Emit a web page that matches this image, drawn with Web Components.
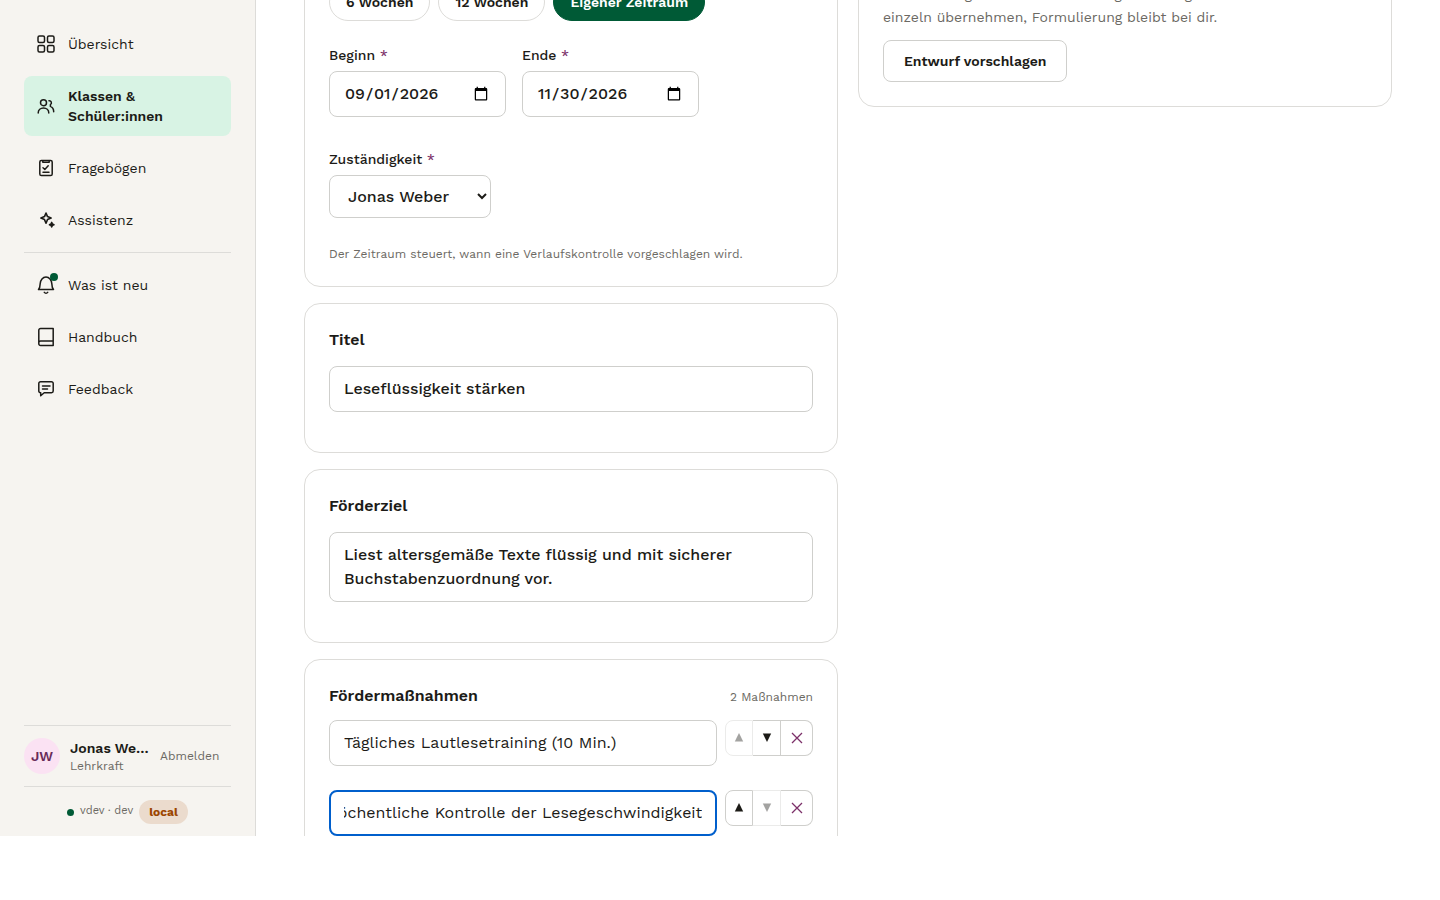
<!DOCTYPE html>
<html lang="de">
<head>
<meta charset="utf-8">
<title>Förderplan bearbeiten</title>
<style>
html, body { margin: 0; height: 100%; }
body {
  --ink: #1c1b17; --muted: #6b6963; --line: #dddcd9; --field: #cfcfcc; --brand: #005a36; --plum: #7c3069;
  background: #fff; color: var(--ink);
  font: 400 14px/20px "Work Sans", Inter, "Liberation Sans", sans-serif;
}
</style>
</head>
<body>
<app-shell>
  <side-bar slot="side">
    <nav-item icon="grid">Übersicht</nav-item>
    <nav-item icon="people" current>Klassen &amp; Schüler:innen</nav-item>
    <nav-item icon="clipboard">Fragebögen</nav-item>
    <nav-item icon="sparkle">Assistenz</nav-item>
    <nav-item icon="bell" unread class="section">Was ist neu</nav-item>
    <nav-item icon="book">Handbuch</nav-item>
    <nav-item icon="chat">Feedback</nav-item>
    <user-panel slot="foot"></user-panel>
  </side-bar>
  <plan-column>
    <period-card></period-card>
    <text-card heading="Titel" value="Leseflüssigkeit stärken"></text-card>
    <text-card heading="Förderziel" multiline value="Liest altersgemäße Texte flüssig und mit sicherer Buchstabenzuordnung vor."></text-card>
    <measures-card></measures-card>
  </plan-column>
  <plan-column><draft-card></draft-card></plan-column>
</app-shell>

<script>
const base = `
  *, *::before, *::after { box-sizing: border-box; }
  button, input, textarea, select { font: inherit; color: inherit; margin: 0; }
  h2 { margin: 0; font-size: 16px; line-height: 24px; font-weight: 600; }
  .field { display: block; width: 100%; border: 1px solid var(--field); border-radius: 8px; background: #fff;
    font-size: 16px; line-height: 24px; padding: 10px 14px; outline: none; }
`;
const card = `
  :host { display: block; border: 1px solid var(--line); border-radius: 16px; padding: 24px; background: #fff; box-sizing: border-box; }
`;
function define(name, css, html, ready) {
  customElements.define(name, class extends HTMLElement {
    constructor() {
      super();
      this.attachShadow({ mode: 'open' });
    }
    connectedCallback() {
      const body = typeof html === 'function' ? html(this) : html;
      this.shadowRoot.innerHTML = `<style>${base}${css}</style>${body}`;
      if (ready) ready(this.shadowRoot);
    }
  });
}

define('app-shell', `
  :host { display: grid; grid-template-columns: 256px minmax(0, 1fr); height: calc(100vh - 64px); overflow: hidden; }
  main { display: grid; grid-template-columns: repeat(2, minmax(0, 1fr)); gap: 20px; padding: 0 48px; align-items: start; min-height: 0; overflow: hidden; }
`, `<slot name="side"></slot><main><slot></slot></main>`);

define('side-bar', `
  :host { display: flex; flex-direction: column; background: #f6f4f0; border-right: 1px solid var(--line); padding: 24px 24px 0; min-height: 0; box-sizing: border-box; }
  nav { display: flex; flex-direction: column; gap: 12px; flex: 1; min-height: 0; }
  ::slotted(.section) { border-top: 1px solid var(--line); padding-top: 12px; }
`, `<nav aria-label="Hauptmenü"><slot></slot></nav><slot name="foot"></slot>`);

const icons = {
  grid: '<rect x="2" y="2" width="6.500" height="6.500" rx="1.500"/><rect x="11.500" y="2" width="6.500" height="6.500" rx="1.500"/><rect x="2" y="11.500" width="6.500" height="6.500" rx="1.500"/><rect x="11.500" y="11.500" width="6.500" height="6.500" rx="1.500"/>',
  people: '<circle cx="7.500" cy="6.700" r="3"/><path d="M2.200 17c0-3 2.400-5 5.300-5s5.300 2 5.300 5M13 4.700c2.200-.3 3.400 2.700 1.400 3.900v1.800c2 .9 3.300 3 3.300 5.400"/>',
  clipboard: '<rect x="3.800" y="2.400" width="12.400" height="15.200" rx="1.600"/><path d="M6.800 2.800v1.500h6.400V2.800M7 9.800l1.800 1.600 3.400-3.600M7 14.200h6"/>',
  sparkle: '<path d="M10 3l1.500 3.600 3.600 1.500-3.600 1.500L10 13.200 8.500 9.600 4.900 8.100l3.600-1.500z" stroke-width="1.600"/><path d="M15.700 12.400l.7 1.600 1.600.7-1.600.7-.7 1.600-.7-1.600-1.600-.7 1.600-.7z" fill="currentColor"/>',
  bell: '<path d="M2.500 14.600h15c-1.300-1.500-1.600-3.300-1.700-6C15.600 5 13.200 2 10 2S4.400 5 4.200 8.600c-.1 2.700-.4 4.500-1.700 6zM8.300 17.400c.8 1.100 2.600 1.100 3.400 0"/>',
  book: '<path d="M17.200 1.500v17H4.600A1.800 1.800 0 0 1 2.800 16.700V3.300A1.800 1.800 0 0 1 4.600 1.500zM2.800 16.700v-1a1.800 1.800 0 0 1 1.800-1.800H17.200"/>',
  chat: '<path d="M4.500 2.700h11A1.700 1.700 0 0 1 17.200 4.400v7.700a1.700 1.700 0 0 1-1.700 1.700H8.200L4.700 16.800v-3H4.500a1.700 1.700 0 0 1-1.700-1.700V4.400a1.700 1.700 0 0 1 1.700-1.700zM6.500 7h7.500M6.500 10h5"/>'
};
define('nav-item', `
  :host { display: block; }
  a { display: flex; align-items: center; gap: 12px; padding: 10px 12px; border-radius: 8px; color: inherit; text-decoration: none; }
  .icon { position: relative; flex: none; width: 20px; height: 20px; }
  svg { display: block; width: 20px; height: 20px; fill: none; stroke: currentColor; stroke-width: 1.5; stroke-linecap: round; stroke-linejoin: round; }
  .dot { position: absolute; top: -2px; right: -2px; width: 8px; height: 8px; border-radius: 50%; background: var(--brand); }
  :host([current]) a { background: #d8f3e4; font-weight: 600; }
`, el => `<a href="#" ${el.hasAttribute('current') ? 'aria-current="page"' : ''}>
  <span class="icon"><svg viewBox="0 0 20 20" aria-hidden="true">${icons[el.getAttribute('icon')]}</svg>${el.hasAttribute('unread') ? '<span class="dot"></span>' : ''}</span>
  <span><slot></slot></span></a>`);

define('user-panel', `
  :host { display: block; font-size: 12px; line-height: 16px; color: var(--muted); }
  .user { display: flex; align-items: center; gap: 10px; border: solid var(--line); border-width: 1px 0; padding: 12px 0; }
  .avatar { display: grid; place-items: center; flex: none; width: 36px; height: 36px; border-radius: 50%; background: #fbe2f3; color: #692b58; font-size: 14px; font-weight: 600; }
  .who { width: 80px; }
  .name { display: block; color: var(--ink); font-size: 14px; line-height: 20px; font-weight: 600; overflow: hidden; white-space: nowrap; text-overflow: ellipsis; }
  button { border: 0; background: none; padding: 0; }
  .env { display: flex; align-items: center; justify-content: center; gap: 6px; padding: 13px 0 12px; }
  .version { font-size: 11px; padding-bottom: 2px; }
  .dot { width: 7px; height: 7px; border-radius: 50%; background: var(--brand); }
  .badge { background: #ebdbcd; color: #9c4600; font-weight: 700; border-radius: 12px; padding: 4px 10px; }
`, `<div class="user"><span class="avatar">JW</span><span class="who"><span class="name">Jonas Weber</span>Lehrkraft</span><button type="button">Abmelden</button></div>
  <div class="env"><span class="dot"></span><span class="version">vdev · dev</span><span class="badge">local</span></div>`);

define('plan-column', `
  :host { display: flex; flex-direction: column; gap: 16px; min-width: 0; }
`, `<slot></slot>`);

define('period-card', card + `
  :host { margin-top: -42px; }
  .chips { display: flex; gap: 8px; margin-bottom: 24px; }
  .chips button { border: 1px solid var(--line); border-radius: 20px; background: #fff; padding: 8px 16px; line-height: 20px; font-weight: 600; white-space: nowrap; }
  .chips button[aria-pressed=true] { background: var(--brand); border-color: var(--brand); color: #fff; }
  .row { display: flex; flex-wrap: wrap; gap: 16px; }
  .item { padding-bottom: 16px; }
  label { display: block; font-weight: 500; margin-bottom: 6px; }
  label span { color: var(--plum); }
  .field { font-weight: 500; }
  input.field { width: 177px; height: 46px; }
  .owner { flex-basis: 100%; }
  select.field { width: 162px; height: 43px; padding: 8px 0 8px 14px; }
  p { margin: 12px 0 0; font-size: 12px; line-height: 16px; color: var(--muted); }
`, `<div class="chips"><button type="button">6 Wochen</button><button type="button">12 Wochen</button><button type="button" aria-pressed="true">Eigener Zeitraum</button></div>
  <div class="row">
    <div class="item"><label for="from">Beginn <span>*</span></label><input class="field" id="from" type="date" value="2026-09-01"></div>
    <div class="item"><label for="to">Ende <span>*</span></label><input class="field" id="to" type="date" value="2026-11-30"></div>
    <div class="item owner"><label for="owner">Zuständigkeit <span>*</span></label><select class="field" id="owner"><option>Jonas Weber</option></select></div>
  </div>
  <p>Der Zeitraum steuert, wann eine Verlaufskontrolle vorgeschlagen wird.</p>`);

define('text-card', card + `
  h2 { margin-bottom: 14px; }
  .field { font-weight: 500; margin-bottom: 16px; resize: none; overflow: hidden; }
  textarea.field { height: 70px; }
`, el => {
  const value = el.getAttribute('value');
  const control = el.hasAttribute('multiline')
    ? `<textarea class="field" rows="2" aria-labelledby="h">${value}</textarea>`
    : `<input class="field" type="text" aria-labelledby="h" value="${value}">`;
  return `<h2 id="h">${el.getAttribute('heading')}</h2>${control}`;
});

define('measures-card', card + `
  header { display: flex; justify-content: space-between; align-items: baseline; margin-bottom: 12px; }
  header span { font-size: 12px; line-height: 16px; color: var(--muted); }
  .measure { display: flex; align-items: flex-start; gap: 8px; margin-bottom: 24px; }
  .field { flex: 1; min-width: 0; }
  .field.active { border: 2px solid #005fcc; padding: 9px 13px; }
  .tools { display: flex; flex: none; }
  .tools button { width: 28px; height: 36px; display: grid; place-items: center; padding: 0; background: #fff; border: 1px solid var(--field); border-left-width: 0; }
  .tools button:first-child { border-left-width: 1px; border-radius: 8px 0 0 8px; }
  .tools button:last-child { width: 32px; border-radius: 0 8px 8px 0; color: var(--plum); }
  .tools button:disabled { opacity: .4; }
  svg { display: block; width: 12px; height: 12px; fill: currentColor; }
  .x { fill: none; stroke: currentColor; stroke-width: 1.3; }
`, () => {
  const row = (value, cls, up, down) => `<div class="measure"><input class="field ${cls}" type="text" aria-label="Maßnahme" value="${value}">
    <div class="tools"><button type="button" aria-label="Nach oben" ${up}><svg viewBox="0 0 12 12"><path d="M6 1l4.200 8.500H1.800z"/></svg></button><button type="button" aria-label="Nach unten" ${down}><svg viewBox="0 0 12 12"><path d="M1.800 1.500h8.400L6 10z"/></svg></button><button type="button" aria-label="Entfernen"><svg class="x" viewBox="0 0 12 12"><path d="M1 1l10 10M11 1L1 11"/></svg></button></div></div>`;
  return `<header><h2>Fördermaßnahmen</h2><span>2 Maßnahmen</span></header>
    ${row('Tägliches Lautlesetraining (10 Min.)', '', 'disabled', '')}
    ${row('Wöchentliche Kontrolle der Lesegeschwindigkeit', 'active', '', 'disabled')}`;
}, root => {
  const active = root.querySelector('.active');
  active.scrollLeft = active.scrollWidth;
});

define('draft-card', card + `
  :host { margin-top: -42px; }
  p { margin: 0 0 11px; line-height: 23px; color: var(--muted); }
  button { height: 42px; padding: 0 20px; background: #fff; border: 1px solid var(--field); border-radius: 8px; font-weight: 600; }
`, `<p>Auf Grundlage deiner Beobachtung Vorschläge<br>einzeln übernehmen, Formulierung bleibt bei dir.</p>
  <button type="button">Entwurf vorschlagen</button>`);
</script>
</body>
</html>
